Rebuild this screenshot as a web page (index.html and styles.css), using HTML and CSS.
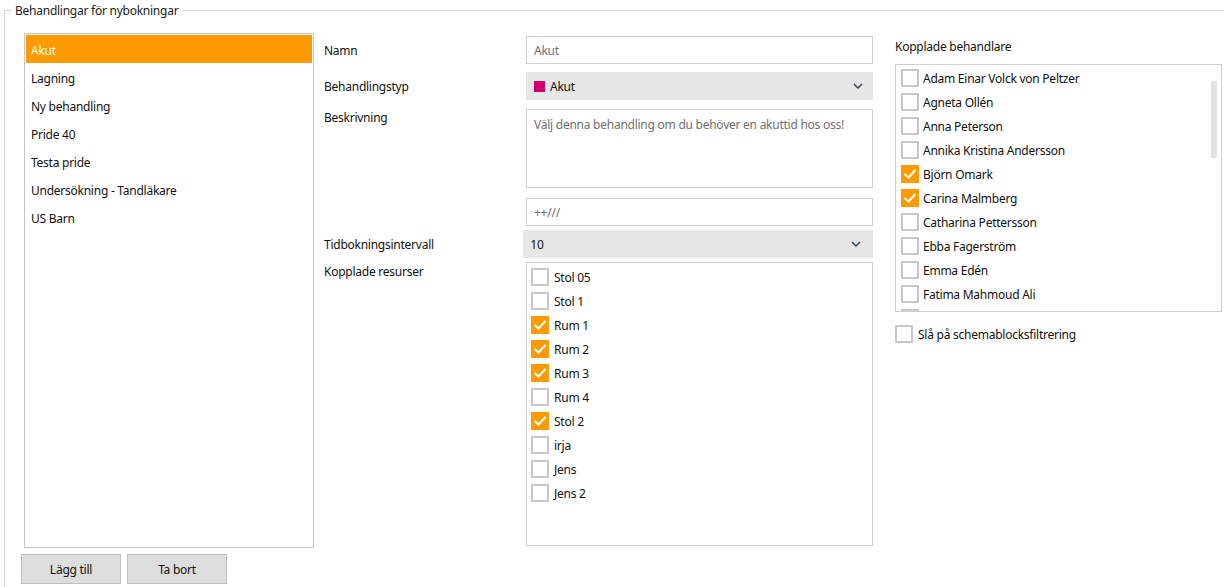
FILE: index.html
```html
<!DOCTYPE html>
<html lang="sv">
<head>
<meta charset="utf-8">
<link rel="stylesheet" href="styles.css">
</head>
<body>
<div class="group">
  <span class="group-title">Behandlingar för nybokningar</span>
  <div class="content">
    <div class="col-left">
      <ul class="listbox">
        <li class="selected">Akut</li>
        <li>Lagning</li>
        <li>Ny behandling</li>
        <li>Pride 40</li>
        <li>Testa pride</li>
        <li>Undersökning - Tandläkare</li>
        <li>US Barn</li>
      </ul>
      <div class="buttons">
        <button class="btn">Lägg till</button>
        <button class="btn">Ta bort</button>
      </div>
    </div>

    <div class="col-mid">
      <div class="row r-namn">
        <div class="label">Namn</div>
        <div class="field input">Akut</div>
      </div>
      <div class="row r-typ">
        <div class="label">Behandlingstyp</div>
        <div class="field select"><span class="swatch"></span><span class="sel-text">Akut</span><svg class="chev" width="10" height="6" viewBox="0 0 10 6"><path d="M1 1 L5 5 L9 1" fill="none" stroke="#2b3a55" stroke-width="1.4"/></svg></div>
      </div>
      <div class="row r-besk">
        <div class="label label-top">Beskrivning</div>
        <div class="field textarea">Välj denna behandling om du behöver en akuttid hos oss!</div>
      </div>
      <div class="row r-extra">
        <div class="label"></div>
        <div class="field input">++///</div>
      </div>
      <div class="row r-tid">
        <div class="label">Tidbokningsintervall</div>
        <div class="field select wide"><span class="sel-text dark">10</span><svg class="chev" width="10" height="6" viewBox="0 0 10 6"><path d="M1 1 L5 5 L9 1" fill="none" stroke="#2b3a55" stroke-width="1.4"/></svg></div>
      </div>
      <div class="row r-res">
        <div class="label label-top2">Kopplade resurser</div>
        <div class="field checklist res">
          <div class="ci"><span class="cb"></span>Stol 05</div>
          <div class="ci"><span class="cb"></span>Stol 1</div>
          <div class="ci"><span class="cb on"><svg width="18" height="18" viewBox="0 0 18 18"><path d="M3.5 9 L7.5 12.5 L14.5 5" fill="none" stroke="#fff" stroke-width="2"/></svg></span>Rum 1</div>
          <div class="ci"><span class="cb on"><svg width="18" height="18" viewBox="0 0 18 18"><path d="M3.5 9 L7.5 12.5 L14.5 5" fill="none" stroke="#fff" stroke-width="2"/></svg></span>Rum 2</div>
          <div class="ci"><span class="cb on"><svg width="18" height="18" viewBox="0 0 18 18"><path d="M3.5 9 L7.5 12.5 L14.5 5" fill="none" stroke="#fff" stroke-width="2"/></svg></span>Rum 3</div>
          <div class="ci"><span class="cb"></span>Rum 4</div>
          <div class="ci"><span class="cb on"><svg width="18" height="18" viewBox="0 0 18 18"><path d="M3.5 9 L7.5 12.5 L14.5 5" fill="none" stroke="#fff" stroke-width="2"/></svg></span>Stol 2</div>
          <div class="ci"><span class="cb"></span>irja</div>
          <div class="ci"><span class="cb"></span>Jens</div>
          <div class="ci"><span class="cb"></span>Jens 2</div>
        </div>
      </div>
    </div>

    <div class="col-right">
      <div class="rlabel">Kopplade behandlare</div>
      <div class="checklist staff">
        <div class="ci"><span class="cb"></span>Adam Einar Volck von Peltzer</div>
        <div class="ci"><span class="cb"></span>Agneta Ollén</div>
        <div class="ci"><span class="cb"></span>Anna Peterson</div>
        <div class="ci"><span class="cb"></span>Annika Kristina Andersson</div>
        <div class="ci"><span class="cb on"><svg width="18" height="18" viewBox="0 0 18 18"><path d="M3.5 9 L7.5 12.5 L14.5 5" fill="none" stroke="#fff" stroke-width="2"/></svg></span>Björn Omark</div>
        <div class="ci"><span class="cb on"><svg width="18" height="18" viewBox="0 0 18 18"><path d="M3.5 9 L7.5 12.5 L14.5 5" fill="none" stroke="#fff" stroke-width="2"/></svg></span>Carina Malmberg</div>
        <div class="ci"><span class="cb"></span>Catharina Pettersson</div>
        <div class="ci"><span class="cb"></span>Ebba Fagerström</div>
        <div class="ci"><span class="cb"></span>Emma Edén</div>
        <div class="ci"><span class="cb"></span>Fatima Mahmoud Ali</div>
        <div class="ci"><span class="cb"></span></div>
        <span class="thumb"></span>
      </div>
      <div class="ci filter"><span class="cb"></span>Slå på schemablocksfiltrering</div>
    </div>
  </div>
</div>
</body>
</html>
```

FILE: styles.css
```css
* { box-sizing: border-box; }
html, body { margin: 0; padding: 0; background: #fff; }
body {
  font-family: "Noto Sans", "Open Sans", sans-serif;
  font-size: 12px;
  letter-spacing: -0.25px;
  color: #111;
  width: 1224px;
  height: 587px;
  overflow: hidden;
}
.group {
  position: relative;
  margin: 10px 0 0 4px;
  border-top: 1px solid #d4d4d4;
  border-left: 1px solid #d4d4d4;
  padding: 22px 0 0 19px;
  height: 600px;
}
.group-title {
  position: absolute;
  top: -7px;
  left: 6px;
  background: #fff;
  padding: 0 4px;
  line-height: 14px;
  color: #222;
}
.content { display: flex; }

.col-left { width: 290px; display: flex; flex-direction: column; }
.listbox {
  list-style: none;
  margin: 0;
  padding: 1px;
  height: 515px;
  border: 1px solid #c6c6c6;
}
.listbox li {
  height: 28px;
  line-height: 25px;
  padding: 3px 0 0 5px;
  color: #111;
}
.listbox li.selected { background: #ff9b00; color: #fff; }
.buttons { display: flex; gap: 6px; margin: 6px 0 0 -3px; }
.btn {
  width: 100px;
  height: 30px;
  background: #dddddd;
  border: 1px solid #bfbfbf;
  font: inherit;
  letter-spacing: inherit;
  color: #111;
  padding: 1px 0 0;
}

.col-mid { width: 559px; display: flex; flex-direction: column; }
.row { display: flex; }
.label { width: 212px; padding-left: 10px; display: flex; align-items: center; color: #111; padding-top: 1px; }
.label-top { align-items: flex-start; padding-top: 0; }
.label-top2 { align-items: flex-start; padding-top: 1px; }
.field { width: 347px; }
.input {
  height: 28px;
  border: 1px solid #cfcfcf;
  padding-left: 7px;
  line-height: 28px;
  color: #707070;
}
.select {
  height: 28px;
  background: #e6e6e6;
  display: flex;
  align-items: center;
  padding-left: 8px;
  position: relative;
}
.select.wide { width: 351px; margin-left: -2px; padding-left: 7px; }
.swatch { width: 11px; height: 11px; background: #d1006c; margin-right: 5px; }
.sel-text { color: #111; flex: 1; padding-top: 1px; }
.chev { margin-right: 10px; }
.select.wide .chev { margin-right: 12px; }
.textarea {
  height: 79px;
  border: 1px solid #cfcfcf;
  padding: 7px 7px;
  color: #707070;
  line-height: 16px;
}
.r-namn { margin-top: 3px; }
.r-typ { margin-top: 8px; }
.r-besk { margin-top: 9px; }
.r-extra { margin-top: 10px; }
.r-tid { margin-top: 4px; }
.r-res { margin-top: 4px; }

.checklist { border: 1px solid #cfcfcf; }
.res { height: 284px; padding: 2px 4px; }
.ci { display: flex; align-items: center; height: 24px; color: #111; }
.cb {
  width: 18px;
  height: 18px;
  border: 2px solid #c8c8c8;
  margin-right: 5px;
  flex: none;
  position: relative;
}
.cb.on { background: #ff9b00; border-color: #ff9b00; }
.cb svg { position: absolute; left: -2px; top: -2px; }
.staff .cb { margin-right: 4px; }

.col-right { width: 327px; margin-left: 22px; }
.rlabel { height: 31px; line-height: 28px; }
.staff {
  height: 248px;
  padding: 1px 5px;
  overflow: hidden;
  position: relative;
}
.thumb {
  position: absolute;
  right: 4px;
  top: 16px;
  width: 6px;
  height: 77px;
  background: #e2e2e2;
}
.filter { margin-top: 10px; }
```
